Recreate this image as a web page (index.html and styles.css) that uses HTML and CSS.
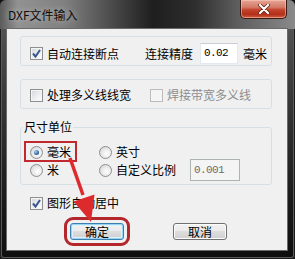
FILE: index.html
```html
<!DOCTYPE html>
<html lang="zh-CN">

<head>
  <meta charset="UTF-8">
  <meta name="viewport" content="width=device-width, initial-scale=1.0">
  <title>DXF文件输入</title>
  <link rel="stylesheet" href="styles.css">
</head>

<body>
  <div class="window">
    <div class="titlebar">
      <span class="title">DXF文件输入</span>
      <span class="close-btn">
        <svg width="12" height="10" viewBox="0 0 12 10">
          <path d="M2 1 L10 9 M10 1 L2 9" stroke="#5a1e12" stroke-width="3.6" stroke-linecap="round" />
          <path d="M2 1 L10 9 M10 1 L2 9" stroke="#ffffff" stroke-width="2.2" stroke-linecap="round" />
        </svg>
      </span>
    </div>

    <div class="client">
      <div class="group group-connect">
        <label class="option">
          <span class="check"><svg width="11" height="11" viewBox="0 0 11 11"><path d="M2 5.5 L4.5 8.5 L9 2" fill="none" stroke="#3b5590" stroke-width="2" /></svg></span>
          自动连接断点
        </label>
        <span class="field-label">连接精度</span>
        <span class="textbox">0.02</span>
        <span class="unit-label">毫米</span>
      </div>

      <div class="group group-width">
        <label class="option">
          <span class="check"></span>
          处理多义线线宽
        </label>
        <label class="option disabled">
          <span class="check"></span>
          焊接带宽多义线
        </label>
      </div>

      <fieldset class="units">
        <legend>尺寸单位</legend>
        <div class="unit-grid">
          <label class="option marked">
            <span class="radio checked"></span>
            毫米
          </label>
          <label class="option">
            <span class="radio"></span>
            英寸
          </label>
          <span></span>
          <label class="option">
            <span class="radio"></span>
            米
          </label>
          <label class="option">
            <span class="radio"></span>
            自定义比例
          </label>
          <span class="textbox textbox-disabled">0.001</span>
        </div>
      </fieldset>

      <label class="option center-option">
        <span class="check"><svg width="11" height="11" viewBox="0 0 11 11"><path d="M2 5.5 L4.5 8.5 L9 2" fill="none" stroke="#3b5590" stroke-width="2" /></svg></span>
        图形自动居中
      </label>

      <div class="buttons">
        <button class="btn btn-default">确定</button>
        <button class="btn">取消</button>
      </div>

      <!-- annotation arrow drawn over the dialog -->
      <svg class="arrow" width="100" height="200" viewBox="0 0 100 200">
        <path d="M63 129 L76 166" stroke="#dd2a2c" stroke-width="3.5" />
        <polygon points="66.5,172.4 87.5,165.6 84,193" fill="#dd2a2c" />
      </svg>
    </div>
  </div>
</body>

</html>
```

FILE: styles.css
```css
* {
  box-sizing: border-box;
}

body {
  margin: 0;
  background: #111;
  font-family: "Noto Sans CJK SC", "Noto Sans", sans-serif;
  font-size: 12px;
  color: #000;
}

.window {
  width: 295px;
  height: 259px;
  padding: 0 8px 9px 7px;
  background: linear-gradient(180deg, #5e5e5e 0%, #3a3a3a 35%, #1c1c1c 75%, #0e0e0e 100%);
  border-radius: 6px 6px 4px 4px;
  box-shadow: inset 0 0 0 1px #1a1a1a, inset 0 0 0 2px #5a5a5a;
}

.titlebar {
  height: 29px;
  margin: 0 -8px 0 -7px;
  display: flex;
  justify-content: space-between;
  align-items: flex-start;
  background: linear-gradient(90deg, #5a5a5a 0%, #929292 6%, #808080 22%, #444444 40%, #1e1e1e 52%, #2e2e2e 66%, #5c5c5c 80%, #8a8a8a 100%);
  border-radius: 6px 6px 0 0;
}

.title {
  padding: 7px 0 0 8px;
  line-height: 16px;
  color: #0c0c0c;
  text-shadow: 0 0 6px rgba(255, 255, 255, 0.55);
}

.close-btn {
  width: 47px;
  height: 19px;
  margin-right: 8px;
  display: flex;
  align-items: center;
  justify-content: center;
  border: 1px solid #3a1a14;
  border-top: none;
  border-radius: 0 0 5px 5px;
  background: linear-gradient(180deg, #e6a696 0%, #d47a66 40%, #c2432b 55%, #b3301a 80%, #d0603c 100%);
  box-shadow: inset 0 0 0 1px rgba(255, 210, 200, 0.5);
}

.client {
  position: relative;
  height: 221px;
  padding: 7px 15px 0 13px;
  background: #f0f0f0;
  box-shadow: 0 0 0 1px #6a6a6a;
}

.group {
  height: 30px;
  display: flex;
  align-items: center;
  padding-left: 9px;
  border: 1px solid #d5dfe5;
  border-radius: 3px;
}

.group-connect {
  padding-top: 5px;
}

.group-width {
  margin-top: 13px;
  padding-top: 2px;
}

.option {
  position: relative;
  display: flex;
  align-items: center;
  gap: 4px;
  line-height: 16px;
  white-space: nowrap;
}

.option.disabled {
  margin-left: 19px;
  color: #8d8d8d;
}

.check {
  width: 13px;
  height: 13px;
  display: flex;
  align-items: center;
  justify-content: center;
  border: 1px solid #8e8f8f;
  background: linear-gradient(135deg, #d3d6db 0%, #eef0f2 60%, #ffffff 100%);
  box-shadow: inset 0 0 0 1px #f5f5f5;
}

.disabled .check {
  border-color: #bcbcbc;
  background: #f4f4f4;
}

.radio {
  width: 13px;
  height: 13px;
  padding: 3px;
  border: 1px solid #8e8f8f;
  border-radius: 50%;
  background: radial-gradient(circle at 60% 60%, #ffffff 0%, #e6e6e6 55%, #c9c9c9 100%);
}

.radio.checked::after {
  content: "";
  display: block;
  width: 5px;
  height: 5px;
  border-radius: 50%;
  background: radial-gradient(circle at 35% 35%, #a9d4f5 0%, #3f77b0 50%, #1b3f6b 100%);
}

.field-label {
  margin-left: 26px;
  line-height: 16px;
}

.textbox {
  width: 38px;
  height: 21px;
  margin-left: 7px;
  padding: 2px 0 0 3px;
  border: 1px solid #e3e9ef;
  border-top-color: #c9ced4;
  background: #fff;
  font-family: "Liberation Mono", monospace;
  font-size: 11px;
  letter-spacing: -0.6px;
  line-height: 15px;
}

.unit-label {
  margin-left: 5px;
  line-height: 16px;
}

.units {
  margin: 10px 0 0;
  padding: 0 0 3px 2px;
  border: 1px solid #d5dfe5;
  border-radius: 3px;
  min-width: 0;
}

.units legend {
  padding: 0 1px;
  line-height: 16px;
}

.unit-grid {
  display: grid;
  grid-template-columns: 69px 91px auto;
  grid-template-rows: 14px 22px;
  align-items: center;
  justify-items: start;
  padding: 10px 0 0 7px;
}

.textbox-disabled {
  width: 50px;
  height: 22px;
  margin-left: 0;
  padding: 3px 0 0 3px;
  border: 1px solid #adb2b5;
  background: #f4f4f4;
  color: #6d6d6d;
}

.marked::after {
  content: "";
  position: absolute;
  top: -3px;
  right: -6px;
  bottom: -2px;
  left: -6px;
  border: 2px solid #c2292e;
}

.center-option {
  margin: 10px 0 0 10px;
}

.buttons {
  display: flex;
  gap: 49px;
  margin-top: 12px;
  padding-left: 50px;
}

.btn {
  width: 54px;
  height: 17px;
  padding: 0;
  border: 1px solid #707070;
  border-radius: 3px;
  background: linear-gradient(180deg, #f2f2f2 0%, #ebebeb 49%, #dddddd 50%, #cfcfcf 100%);
  box-shadow: inset 0 0 0 1px #fcfcfc;
  font-family: inherit;
  font-size: 12px;
  line-height: 15px;
  color: #000;
}

.btn-default {
  border-color: #3c7fb1;
  box-shadow: inset 0 0 0 1px #98d4f2, inset 0 0 0 2px #dff1fb;
  outline: 3px solid #b3262c;
  outline-offset: 3px;
}

.arrow {
  position: absolute;
  top: 0;
  left: 0;
}
```
